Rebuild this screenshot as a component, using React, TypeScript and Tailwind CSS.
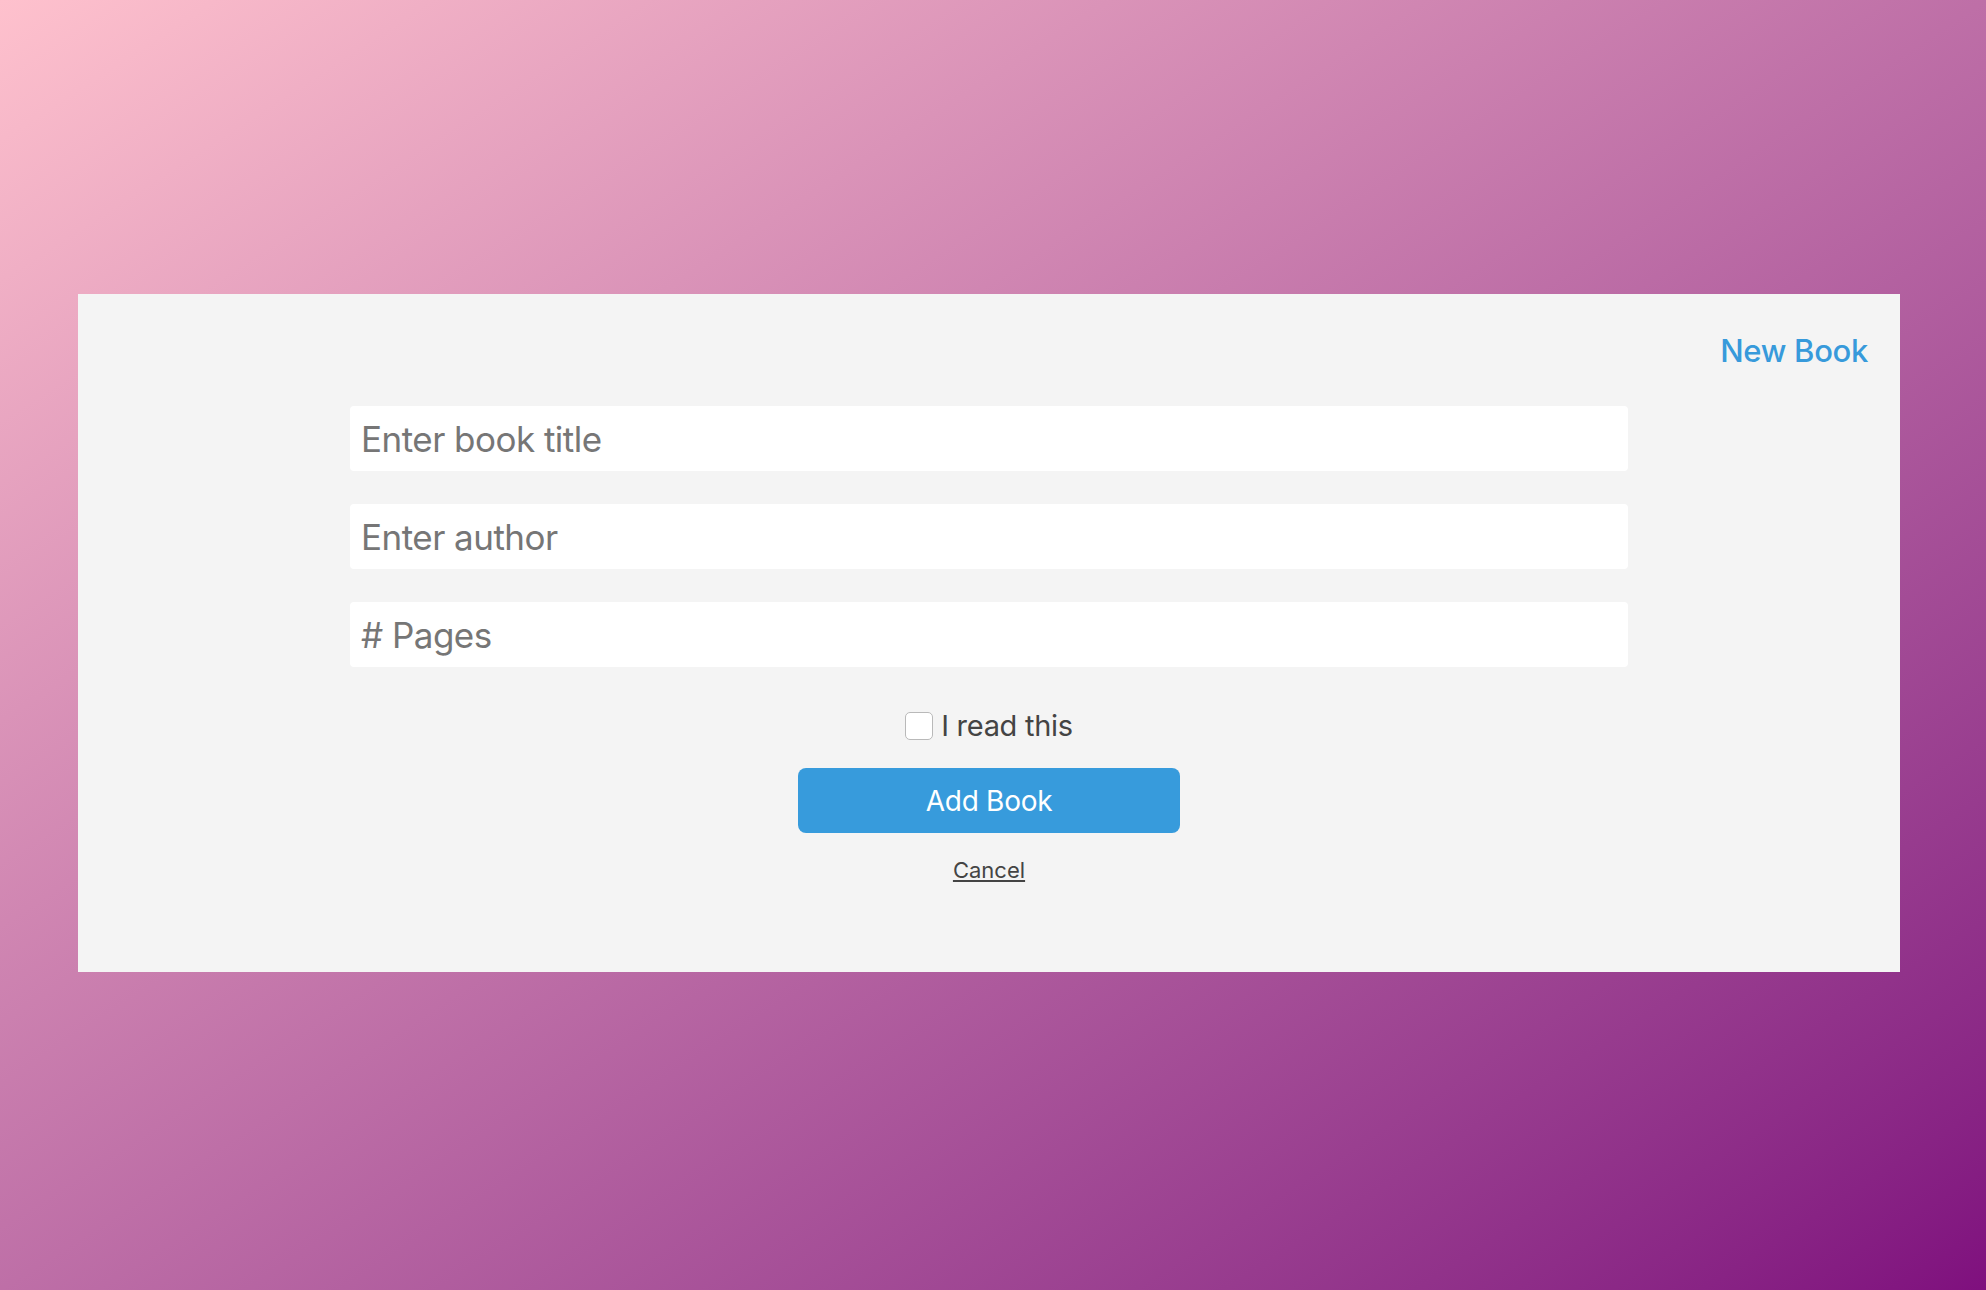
import { useState } from "react";

export default function App() {
  const [read, setRead] = useState(false);

  return (
    <div className="min-h-[1290px] w-full bg-gradient-to-br from-[#fec1cd] to-[#7f0f7e] pt-[294px] font-['Inter',sans-serif]">
      <div className="ml-[78px] w-[1822px] h-[678px] bg-[#f4f4f4] flex flex-col">
        <div className="flex justify-end pt-[37px] pr-[32px]">
          <a href="#" className="text-[31px] leading-[40px] font-medium tracking-[-0.01em] text-[#379adb]">
            New Book
          </a>
        </div>

        <form className="mt-[35px] flex flex-col items-center">
          <div className="w-[1278px] flex flex-col gap-[33px]">
            <input
              type="text"
              placeholder="Enter book title"
              className="h-[65px] w-full rounded-[4px] bg-white px-[11px] text-[35px] tracking-[-0.015em] text-[#333] placeholder:text-[#767676] outline-none"
            />
            <input
              type="text"
              placeholder="Enter author"
              className="h-[65px] w-full rounded-[4px] bg-white px-[11px] text-[35px] tracking-[-0.015em] text-[#333] placeholder:text-[#767676] outline-none"
            />
            <input
              type="text"
              placeholder="# Pages"
              className="h-[65px] w-full rounded-[4px] bg-white px-[11px] text-[35px] tracking-[-0.015em] text-[#333] placeholder:text-[#767676] outline-none"
            />
          </div>

          <label className="mt-[41px] flex items-center gap-[8px] cursor-pointer">
            <span
              onClick={() => setRead(!read)}
              className={
                "w-[28px] h-[28px] rounded-[5px] border border-[#b9b9b9] " +
                (read ? "bg-[#379adb]" : "bg-white")
              }
            />
            <span className="text-[29px] leading-[36px] tracking-[-0.01em] text-[#444]">I read this</span>
          </label>

          <button
            type="button"
            className="mt-[24px] w-[382px] h-[65px] rounded-[8px] bg-[#379bdc] text-white text-[28px] tracking-[-0.01em]"
          >
            Add Book
          </button>

          <a href="#" className="mt-[23px] text-[22px] leading-[28px] text-[#444] underline">
            Cancel
          </a>
        </form>
      </div>
    </div>
  );
}
